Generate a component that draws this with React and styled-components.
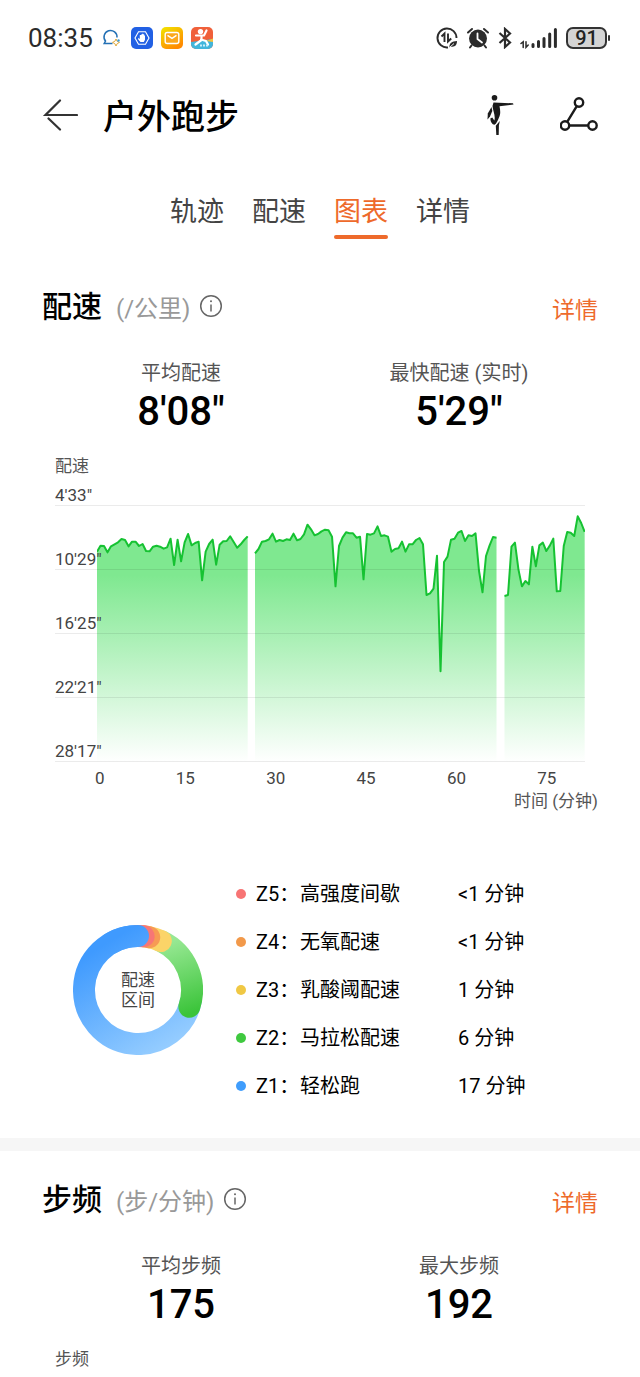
import React from 'react'
import styled, { createGlobalStyle } from 'styled-components'

const GlobalStyle = createGlobalStyle`
  * { box-sizing: border-box; }
  body {
    margin: 0;
    background: #fff;
    color: #000;
    font-family: Roboto, "Noto Sans CJK SC", sans-serif;
  }
  h1, h2, p, ul, dl, dd { margin: 0; padding: 0; }
  svg { display: block; flex: none; }
`

const StatusBar = styled.div`
  display: flex;
  align-items: center;
  justify-content: space-between;
  height: 76px;
  padding: 0 30px 0 28px;
`

const StatusGroup = styled.div`
  display: flex;
  align-items: center;
  gap: 8px;
`

const Clock = styled.span`
  font-size: 26px;
  line-height: 36px;
  color: #2b2b2b;
`

const Battery = styled.div`
  display: flex;
  align-items: center;
  gap: 1px;

  &::after {
    content: "";
    width: 2px;
    height: 6px;
    border-radius: 1px;
    background: #333;
  }
`

const BatteryBody = styled.span`
  width: 41px;
  height: 22px;
  border: 2px solid #333;
  border-radius: 7px;
  background: #d4d4d4;
  color: #222;
  font-size: 20px;
  font-weight: 500;
  line-height: 18px;
  text-align: center;
`

const Header = styled.header`
  display: flex;
  align-items: center;
  height: 78px;
  padding: 0 42px;
`

const IconButton = styled.button`
  padding: 0;
  border: 0;
  background: none;
  color: #222;
  cursor: pointer;
`

const Title = styled.h1`
  flex: 1;
  margin-left: 25px;
  padding-top: 4px;
  font-size: 34px;
  font-weight: 500;
  line-height: 48px;
`

const HeaderActions = styled.div`
  display: flex;
  align-items: center;
  gap: 46px;
`

const Tabs = styled.nav`
  display: flex;
  justify-content: center;
  gap: 28px;
  padding: 37px 0 19px;
`

const Tab = styled.button`
  display: flex;
  flex-direction: column;
  justify-content: space-between;
  height: 48px;
  padding: 0;
  border: 0;
  background: none;
  color: ${p => (p.$active ? '#ee6a2b' : '#444')};
  font-family: inherit;
  font-size: 27px;
  line-height: 43px;
  cursor: pointer;

  &::after {
    content: "";
    width: 100%;
    height: 4px;
    border-radius: 2px;
    background: ${p => (p.$active ? '#ee6a2b' : 'transparent')};
  }
`

const Section = styled.section`
  padding: 28px 42px 0;
`

const SectionHead = styled.div`
  display: flex;
  justify-content: space-between;
  height: 40px;
`

const SectionName = styled.div`
  display: flex;
  align-items: baseline;
  line-height: 42px;
`

const SectionTitle = styled.h2`
  font-size: 30px;
  font-weight: 500;
`

const Unit = styled.span`
  margin: 0 9px 0 14px;
  color: #999;
  font-size: 24px;
`

const InfoButton = styled(IconButton)`
  align-self: center;
  color: #666;
`

const DetailLink = styled.a`
  color: #ee6a2b;
  font-size: 23px;
  line-height: 50px;
  text-decoration: none;
`

const Stats = styled.dl`
  display: grid;
  grid-template-columns: 1fr 1fr;
  padding-top: 33px;
  text-align: center;
`

const StatLabel = styled.dt`
  color: #555;
  font-size: 20px;
  line-height: 28px;
`

const StatValue = styled.dd`
  font-size: 40px;
  font-weight: 500;
  line-height: 50px;
`

const AxisName = styled.p`
  margin: 17px 13px 0;
  color: #555;
  font-size: 17px;
  line-height: 24px;
`

const Plot = styled.div`
  position: relative;
  margin: 0 13px;
`

const PlotSvg = styled.svg`
  position: absolute;
  top: 28px;
  left: 42px;
  width: calc(100% - 42px);
  height: calc(100% - 28px);
`

const GridRow = styled.div`
  position: relative;
  display: flex;
  align-items: flex-end;
  height: ${p => (p.$first ? 28 : 64)}px;
  border-bottom: 1px solid rgba(0, 0, 0, 0.08);
  color: #444;
  font-size: 17px;
  line-height: 20px;
`

const TimeAxis = styled.div`
  display: grid;
  grid-template-columns: 1fr repeat(5, 2fr);
  margin: 4px 6px 0 53px;
  color: #444;
  font-size: 17px;
  line-height: 24px;
  text-align: center;

  span:first-child { text-align: left; }
`

const TimeUnit = styled.p`
  color: #555;
  font-size: 17px;
  line-height: 22px;
  text-align: right;
`

const Zones = styled.div`
  display: flex;
  align-items: center;
  gap: 33px;
  padding: 58px 0 28px 31px;
`

const Donut = styled.div`
  display: grid;
  place-items: center;

  > * { grid-area: 1 / 1; }
`

const DonutLabel = styled.p`
  width: 2em;
  color: #444;
  font-size: 17px;
  line-height: 20px;
  text-align: center;
`

const ZoneList = styled.ul`
  flex: 1;
  list-style: none;
`

const ZoneRow = styled.li`
  display: grid;
  grid-template-columns: 20px 44px 158px 1fr;
  align-items: center;
  height: 48px;
  font-size: 20px;
  line-height: 28px;
  white-space: nowrap;
`

const Dot = styled.span`
  width: 10px;
  height: 10px;
  border-radius: 50%;
  background: ${p => p.$color};
`

const Divider = styled.div`
  height: 13px;
  background: #f6f6f6;
`

// pace samples, 0 = top grid line, 768 = bottom grid line
const segments = [
  {
    from: 0,
    to: 453,
    values: [
      137, 119, 120, 139, 121, 115, 109, 99, 102, 121, 107, 107, 120, 114, 135, 136, 122, 119, 122, 128, 124, 98,
      177, 101, 166, 109, 84, 118, 111, 107, 223, 137, 114, 101, 176, 116, 106, 105, 91, 108, 125, 115, 102, 91
    ]
  },
  {
    from: 475,
    to: 1201,
    values: [
      142, 129, 107, 105, 100, 83, 107, 102, 105, 100, 102, 83, 103, 99, 85, 56, 70, 88, 84, 76, 71, 73, 92, 241,
      120, 95, 79, 82, 82, 95, 92, 220, 84, 86, 82, 61, 90, 88, 92, 137, 129, 127, 107, 137, 115, 115, 102, 96,
      115, 267, 262, 248, 149, 496, 168, 152, 101, 98, 80, 75, 105, 88, 90, 82, 195, 259, 150, 119, 93, 95
    ]
  },
  {
    from: 1225,
    to: 1466,
    values: [
      270, 267, 122, 110, 190, 241, 225, 235, 122, 181, 118, 110, 135, 119, 98, 256, 255, 120, 78, 80, 90, 31, 51, 78
    ]
  }
]

const paceLabels = ['4\'33"', '10\'29"', '16\'25"', '22\'21"', '28\'17"']
const timeLabels = [0, 15, 30, 45, 60, 75]

const zones = [
  { id: 'Z5', name: '高强度间歇', time: '<1 分钟', color: '#f77474' },
  { id: 'Z4', name: '无氧配速', time: '<1 分钟', color: '#f2994a' },
  { id: 'Z3', name: '乳酸阈配速', time: '1 分钟', color: '#f0c844' },
  { id: 'Z2', name: '马拉松配速', time: '6 分钟', color: '#3fc93f' },
  { id: 'Z1', name: '轻松跑', time: '17 分钟', color: '#3f9dfc' }
]

const linePoints = ({ from, to, values }) =>
  values.map((y, i) => `${(from + ((to - from) * i) / (values.length - 1)).toFixed(1)},${y}`).join(' ')

const PaceChart = () => (
  <Plot>
    <PlotSvg viewBox="0 0 1467 768" preserveAspectRatio="none" aria-hidden="true">
      <defs>
        <linearGradient id="paceFill" gradientUnits="userSpaceOnUse" x1="0" y1="0" x2="0" y2="768">
          <stop offset="0.27" stopColor="#7fe890" />
          <stop offset="1" stopColor="#ffffff" />
        </linearGradient>
      </defs>
      {segments.map(s => (
        <g key={s.from}>
          <polygon points={`${s.from},768 ${linePoints(s)} ${s.to},768`} fill="url(#paceFill)" />
          <polyline
            points={linePoints(s)}
            fill="none"
            stroke="#16c232"
            strokeWidth="2"
            strokeLinejoin="round"
            vectorEffect="non-scaling-stroke"
          />
        </g>
      ))}
    </PlotSvg>
    {paceLabels.map((label, i) => (
      <GridRow key={label} $first={i === 0}>{label}</GridRow>
    ))}
  </Plot>
)

const arc = (a, b) => {
  const point = deg => {
    const r = (deg * Math.PI) / 180
    return `${(65 + 54 * Math.sin(r)).toFixed(2)} ${(65 - 54 * Math.cos(r)).toFixed(2)}`
  }
  return `M${point(a)} A54 54 0 ${b - a > 180 ? 1 : 0} 1 ${point(b)}`
}

const ZoneDonut = () => (
  <Donut>
    <svg width="130" height="130" viewBox="0 0 130 130" fill="none" strokeWidth="22" aria-hidden="true">
      <defs>
        <linearGradient id="easy" gradientUnits="userSpaceOnUse" x1="112" y1="110" x2="50" y2="8">
          <stop offset="0" stopColor="#94ccff" />
          <stop offset="1" stopColor="#3f9afe" />
        </linearGradient>
        <linearGradient id="marathon" gradientUnits="userSpaceOnUse" x1="94" y1="18" x2="118" y2="88">
          <stop offset="0" stopColor="#97e893" />
          <stop offset="1" stopColor="#3bc43a" />
        </linearGradient>
      </defs>
      <path d={arc(100, 359)} stroke="url(#easy)" />
      <g strokeLinecap="round">
        <path d={arc(26, 108)} stroke="url(#marathon)" />
        <path d={arc(11, 25)} stroke="#fbd468" />
        <path d={arc(6, 12)} stroke="#f79a54" />
        <path d={arc(0, 6)} stroke="#f77676" />
        <path d={arc(330, 360)} stroke="url(#easy)" />
      </g>
    </svg>
    <DonutLabel>配速区间</DonutLabel>
  </Donut>
)

const InfoIcon = () => (
  <svg width="24" height="24" viewBox="0 0 24 24" fill="none" stroke="currentColor" strokeWidth="1.5">
    <circle cx="12" cy="12" r="10.3" />
    <path d="M12 10.5v7" />
    <circle cx="12" cy="7.2" r="1" fill="currentColor" stroke="none" />
  </svg>
)

const BackIcon = () => (
  <svg width="36" height="34" viewBox="0 0 36 34" fill="none" stroke="#333" strokeWidth="2.2" strokeLinecap="round">
    <path d="M18 2.5 3.5 17H35M6.500 20.500 18 31.500" />
  </svg>
)

const PostureIcon = () => (
  <svg width="28" height="42" viewBox="0 0 28 42" fill="#1b1b1b">
    <circle cx="8.500" cy="3.800" r="2.800" />
    <path d="M7.500 8.400 27 9.300 27.500 10.500 13.500 12.200 C14.500 17 14.600 20 13 23.500 C11.500 27 10.500 29.800 8.500 30.800 C6 30.500 4.500 28 4.300 24.500 L6.300 23.500 8.300 26.500 C9.800 22 7 17 6.500 12 Z" />
    <path d="M5.500 13 6.300 17 4 22.500 1.500 25.500 1.800 19.500 Z" />
    <path d="M13.800 27 12.900 31.500 12.700 41 10.300 41 9.800 31.800 Z" />
  </svg>
)

const RouteIcon = () => (
  <svg width="38" height="36" viewBox="0 0 38 36" fill="none" stroke="#1b1b1b" strokeWidth="2.400">
    <circle cx="19" cy="5.500" r="4.200" />
    <circle cx="5" cy="28.500" r="4.200" />
    <circle cx="32.500" cy="28.500" r="4.200" />
    <path d="M16.800 9.100 7.200 24.900M9.200 28.500h19" />
  </svg>
)

const ChatIcon = () => (
  <svg width="22" height="22" viewBox="0 0 22 22" fill="none" strokeWidth="1.500">
    <path d="M11.500 16.500H3.200l1.300-2.400A6.500 6.500 0 1 1 16 10.500" stroke="#2471b5" />
    <path d="m15 12 1.200 2.400 2.300 1-2.300 1.200L15 19l-1.200-2.400-2.300-1.200 2.300-1Z" fill="#fff" stroke="#e0a93b" strokeWidth="1" />
    <circle cx="17.500" cy="13.500" r="1.200" fill="#3c9bd6" />
  </svg>
)

const GuardIcon = () => (
  <svg width="22" height="22" viewBox="0 0 22 22">
    <rect width="22" height="22" rx="5" fill="#2160e4" />
    <path d="M7.500 4.800h7L18 11l-3.500 6.200h-7L4 11Z" fill="none" stroke="#fff" strokeWidth="1.100" />
    <path d="M8.800 8v4L7.200 10.800v1.600L9.500 15h3.300l1.200-2.300V8.500h-.8v2V7.300h-1v3V6.800h-1.100v3.500V7.500H10v3V8Z" fill="#fff" />
  </svg>
)

const MailIcon = () => (
  <svg width="22" height="22" viewBox="0 0 22 22">
    <defs>
      <linearGradient id="mail" x1="0" y1="0" x2="0.600" y2="1">
        <stop offset="0" stopColor="#f2e600" />
        <stop offset="1" stopColor="#ff8a00" />
      </linearGradient>
    </defs>
    <rect width="22" height="22" rx="5" fill="url(#mail)" />
    <rect x="4.200" y="5.500" width="13.600" height="11" rx="2" fill="#fba81c" stroke="#fff" strokeWidth="1.400" />
    <path d="m6.500 8.300 4.500 3 4.500-3" fill="none" stroke="#fff" strokeWidth="1.400" />
  </svg>
)

const SportIcon = () => (
  <svg width="22" height="22" viewBox="0 0 22 22">
    <defs>
      <clipPath id="sportClip"><rect width="22" height="22" rx="5" /></clipPath>
    </defs>
    <g clipPath="url(#sportClip)">
      <path d="M0 0h22v22H0Z" fill="#f0603a" />
      <path d="M0 15 22 12v10H0Z" fill="#41b6dc" />
      <path d="M15 14 22 11.500V15Z" fill="#f5c23c" />
      <circle cx="9.500" cy="4.600" r="2.700" fill="#fff" />
      <path d="M15.500 3.500 13 8.500 5 8.500M10.500 8.500v4.500L4.500 17.500M10 12.500l5 1.500 2 3.500" fill="none" stroke="#fff" strokeWidth="2.200" strokeLinecap="round" strokeLinejoin="round" />
      <path d="M9 18.500h8" stroke="#c9eefa" strokeWidth="2" strokeDasharray="2 1" />
    </g>
  </svg>
)

const DataSaverIcon = () => (
  <svg width="22" height="22" viewBox="0 0 22 22" fill="none" stroke="#2b2b2b" strokeWidth="1.900">
    <path d="M20.500 11A9.500 9.500 0 1 0 12 20.450" />
    <path d="M5.500 9.500 8.500 6.500V15M12 6.500V14.500L15.200 11.500" strokeWidth="1.900" />
    <path d="M13.500 20.500C13 16 16 14.500 21 14c0 4-2 6.500-6.500 5.500Z" fill="#2b2b2b" stroke="none" />
    <path d="m14 20 4-3.500" stroke="#fff" strokeWidth="0.900" />
  </svg>
)

const AlarmIcon = () => (
  <svg width="24" height="22" viewBox="0 0 24 22" fill="none" stroke="#2b2b2b" strokeWidth="2" strokeLinecap="round">
    <circle cx="12" cy="11.500" r="9" fill="#2b2b2b" stroke="none" />
    <path d="M2 5.500 6 2M22 5.500 18 2M5.500 18.500 4 20.500M18.500 18.500l1.500 2" />
    <path d="M11.500 6.500v5.500l4.500 3.500" stroke="#fff" strokeWidth="1.800" />
  </svg>
)

const BluetoothIcon = () => (
  <svg width="14" height="22" viewBox="0 0 14 22" fill="none" stroke="#2b2b2b" strokeWidth="2.200">
    <path d="m1.500 6 10.500 9.500-5 4.500V2l5 4.500L1.500 16" />
  </svg>
)

const SignalIcon = () => (
  <svg width="38" height="22" viewBox="0 0 38 22" fill="none" stroke="#2b2b2b" strokeWidth="3" strokeLinecap="round">
    <path d="M1 16.500 3.200 14.800V20.500M6 14.800V20.300L8.200 18" strokeWidth="1.500" />
    <path d="M13 17.500V19.500M18.500 14.500V19.500M24 11.500V19.500M29.700 7V19.500M35.400 2.500V19.500" />
  </svg>
)

const Metrics = ({ title, unit, stats, children }) => (
  <Section>
    <SectionHead>
      <SectionName>
        <SectionTitle>{title}</SectionTitle>
        <Unit>{unit}</Unit>
        <InfoButton aria-label={`${title}说明`}><InfoIcon /></InfoButton>
      </SectionName>
      <DetailLink href="#">详情</DetailLink>
    </SectionHead>
    <Stats>
      {stats.map(([label, value]) => (
        <div key={label}>
          <StatLabel>{label}</StatLabel>
          <StatValue>{value}</StatValue>
        </div>
      ))}
    </Stats>
    <AxisName>{title}</AxisName>
    {children}
  </Section>
)

const App = () => (
  <>
    <GlobalStyle />
    <StatusBar>
      <StatusGroup>
        <Clock>08:35</Clock>
        <ChatIcon />
        <GuardIcon />
        <MailIcon />
        <SportIcon />
      </StatusGroup>
      <StatusGroup>
        <DataSaverIcon />
        <AlarmIcon />
        <BluetoothIcon />
        <SignalIcon />
        <Battery><BatteryBody>91</BatteryBody></Battery>
      </StatusGroup>
    </StatusBar>
    <Header>
      <IconButton aria-label="返回"><BackIcon /></IconButton>
      <Title>户外跑步</Title>
      <HeaderActions>
        <IconButton aria-label="跑姿"><PostureIcon /></IconButton>
        <IconButton aria-label="分享"><RouteIcon /></IconButton>
      </HeaderActions>
    </Header>
    <Tabs>
      <Tab>轨迹</Tab>
      <Tab>配速</Tab>
      <Tab $active aria-current="page">图表</Tab>
      <Tab>详情</Tab>
    </Tabs>
    <Metrics title="配速" unit="(/公里)" stats={[['平均配速', '8\'08"'], ['最快配速 (实时)', '5\'29"']]}>
      <PaceChart />
      <TimeAxis>
        {timeLabels.map(t => <span key={t}>{t}</span>)}
      </TimeAxis>
      <TimeUnit>时间 (分钟)</TimeUnit>
      <Zones>
        <ZoneDonut />
        <ZoneList>
          {zones.map(z => (
            <ZoneRow key={z.id}>
              <Dot $color={z.color} />
              <span>{z.id}：</span>
              <span>{z.name}</span>
              <span>{z.time}</span>
            </ZoneRow>
          ))}
        </ZoneList>
      </Zones>
    </Metrics>
    <Divider />
    <Metrics title="步频" unit="(步/分钟)" stats={[['平均步频', '175'], ['最大步频', '192']]} />
  </>
)

export default App
